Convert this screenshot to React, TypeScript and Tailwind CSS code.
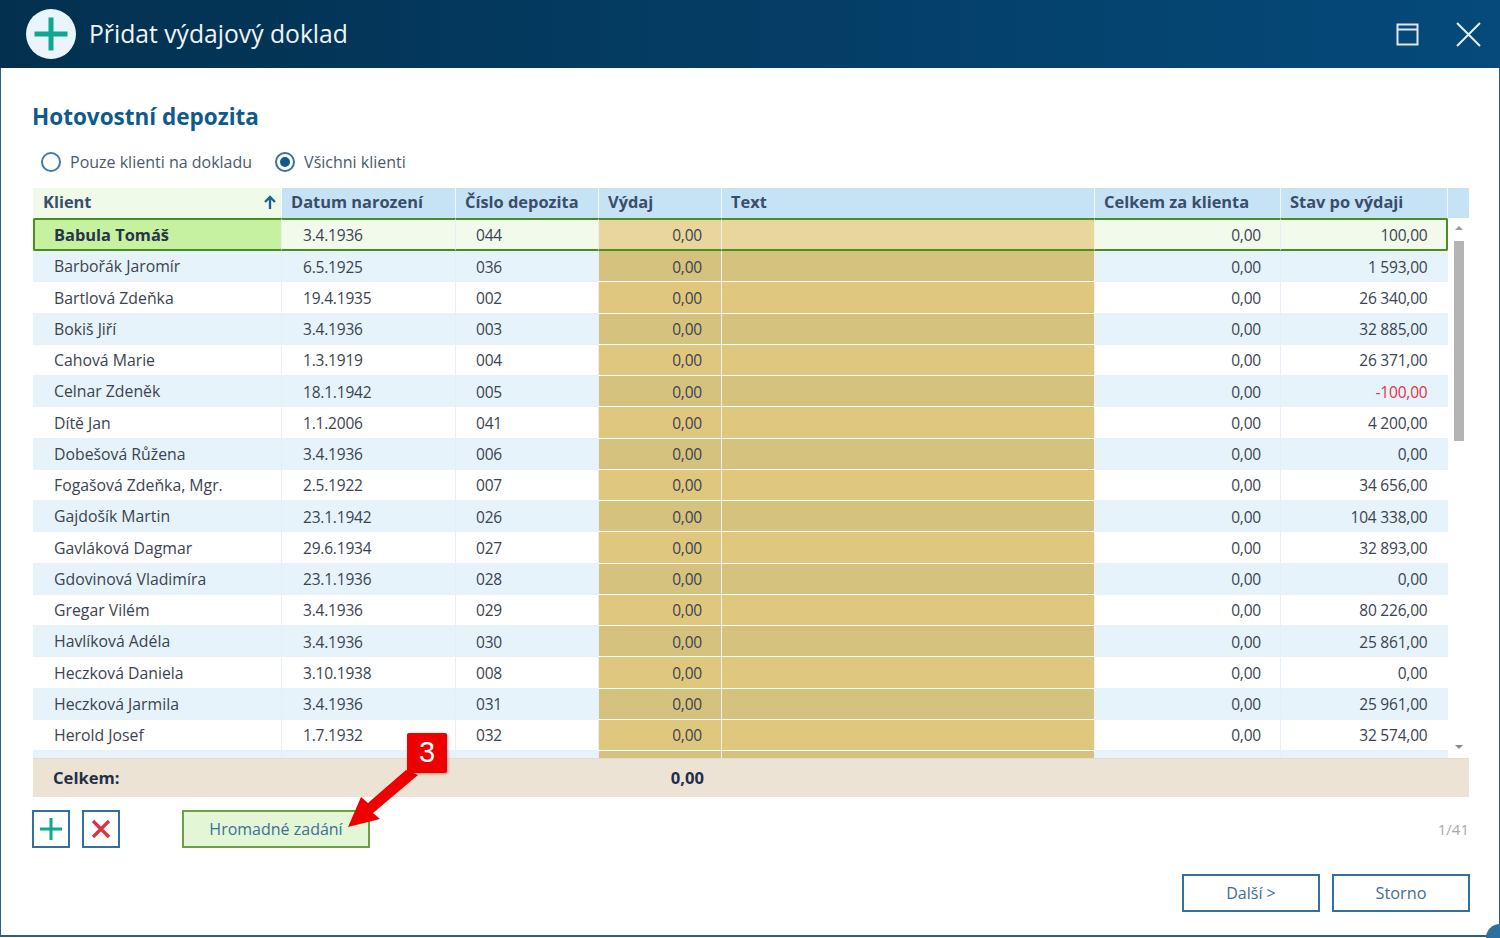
import React from 'react';

const rows = [
  ['Babula Tomáš', '3.4.1936', '044', '0,00', '100,00'],
  ['Barbořák Jaromír', '6.5.1925', '036', '0,00', '1 593,00'],
  ['Bartlová Zdeňka', '19.4.1935', '002', '0,00', '26 340,00'],
  ['Bokiš Jiří', '3.4.1936', '003', '0,00', '32 885,00'],
  ['Cahová Marie', '1.3.1919', '004', '0,00', '26 371,00'],
  ['Celnar Zdeněk', '18.1.1942', '005', '0,00', '-100,00'],
  ['Dítě Jan', '1.1.2006', '041', '0,00', '4 200,00'],
  ['Dobešová Růžena', '3.4.1936', '006', '0,00', '0,00'],
  ['Fogašová Zdeňka, Mgr.', '2.5.1922', '007', '0,00', '34 656,00'],
  ['Gajdošík Martin', '23.1.1942', '026', '0,00', '104 338,00'],
  ['Gavláková Dagmar', '29.6.1934', '027', '0,00', '32 893,00'],
  ['Gdovinová Vladimíra', '23.1.1936', '028', '0,00', '0,00'],
  ['Gregar Vilém', '3.4.1936', '029', '0,00', '80 226,00'],
  ['Havlíková Adéla', '3.4.1936', '030', '0,00', '25 861,00'],
  ['Heczková Daniela', '3.10.1938', '008', '0,00', '0,00'],
  ['Heczková Jarmila', '3.4.1936', '031', '0,00', '25 961,00'],
  ['Herold Josef', '1.7.1932', '032', '0,00', '32 574,00'],
  ['', '', '', '', ''],
];

const headers = ['Datum narození', 'Číslo depozita', 'Výdaj', 'Text', 'Celkem za klienta', 'Stav po výdaji'];

function Row({ row, index }: { row: string[]; index: number }) {
  const selected = index === 0;
  const alt = index % 2 === 1;
  const base = selected ? 'bg-[#f2faec]' : alt ? 'bg-[#e6f3fb]' : 'bg-white';
  const tan = selected ? 'bg-[#e8d69c]' : alt ? 'bg-[#d5c27e]' : 'bg-[#e0c77e]';
  const sel = selected ? 'border-y-2 border-[#4a8f1e]' : 'border-b border-[#e9f0f8]';
  const line = selected ? '' : 'border-b-white';
  const h = selected ? 'h-[33px]' : 'h-[31.25px]';
  return (
    <div className={`grid grid-cols-[249px_174px_143px_123px_373px_186px_167px] ${h} text-[15.5px] tracking-[-0.2px] text-[#3c4350]`}>
      <div
        className={`flex items-center pt-[2px] border-r border-r-[#e6eff8] tracking-normal ${sel} ${
          selected
            ? 'bg-[#c6f1a0] border-l-2 pl-[19px] text-[16.4px] font-bold text-[#27344a] rounded-l-[2px]'
            : `pl-[21px] text-[15.8px] ${base}`
        }`}
      >
        {row[0]}
      </div>
      <div className={`flex items-center pt-[2px] pl-[21px] border-r border-r-[#e6eff8] ${sel} ${base}`}>{row[1]}</div>
      <div className={`flex items-center pt-[2px] pl-[20px] border-r border-r-[#e6eff8] ${sel} ${base}`}>{row[2]}</div>
      <div className={`flex items-center justify-end pt-[2px] pr-[19px] border-r border-r-[#f0f0ea] ${sel} ${line} ${tan}`}>{row[3]}</div>
      <div className={`border-r border-r-[#f0f0ea] ${sel} ${line} ${tan}`} />
      <div className={`flex items-center justify-end pt-[2px] pr-[19px] border-r border-r-[#e6eff8] ${sel} ${base}`}>{row[3]}</div>
      <div
        className={`flex items-center justify-end pt-[2px] ${sel} ${base} ${selected ? 'border-r-2 rounded-r-[2px] pr-[18.5px]' : 'pr-[20.5px]'} ${
          row[4].startsWith('-') ? 'text-[#e8304a]' : ''
        }`}
      >
        {row[4]}
      </div>
    </div>
  );
}

function FrameButton({ children, className }: { children: React.ReactNode; className?: string }) {
  return (
    <button className={`flex items-center justify-center border-2 border-[#35709c] bg-white text-[#3e6f96] ${className ?? ''}`}>
      {children}
    </button>
  );
}

export default function App() {
  return (
    <div className="relative h-[938px] w-[1500px] bg-white font-['Open_Sans',sans-serif] overflow-hidden">
      <div className="flex h-[937px] flex-col border-x border-b-2 border-[#2a5f87]">
        {/* title bar */}
        <div className="-mx-px flex h-[68px] shrink-0 items-center bg-gradient-to-r from-[#03304f] to-[#054a7b] pl-[26px] pr-[19px]">
          <div className="flex h-[50px] w-[50px] items-center justify-center rounded-full bg-[#e9f4fb]">
            <svg width="34" height="34" viewBox="0 0 34 34">
              <path d="M17 0.5V33.5M0.5 17H33.5" stroke="#10a690" strokeWidth="5" />
            </svg>
          </div>
          <div className="ml-[13px] text-[24.7px] text-[#eef5fa]">Přidat výdajový doklad</div>
          <div className="ml-auto flex items-center gap-[37px]">
            <svg width="23" height="23" viewBox="0 0 23 23" fill="none" stroke="#dfe8ef" strokeWidth="2">
              <path d="M1.5 1.5H21.5V21.5H1.5ZM1.5 6.5H21.5" />
            </svg>
            <svg width="25" height="25" viewBox="0 0 25 25" fill="none" stroke="#e6eef4" strokeWidth="2">
              <path d="M1 1L24 24M24 1L1 24" />
            </svg>
          </div>
        </div>

        <div className="flex flex-1 flex-col pl-[32px] pr-[29px]">
          <h1 className="-ml-px mt-[33px] text-[22.5px] leading-[31px] font-bold text-[#0f5a8c]">Hotovostní depozita</h1>

          <div className="mt-[15px] flex h-[30px] items-center pl-[8px] text-[16px] text-[#4a5a6a]">
            <span className="h-[20px] w-[20px] rounded-full border-2 border-[#4a77a0]" />
            <span className="ml-[9px]">Pouze klienti na dokladu</span>
            <span className="ml-[23px] flex h-[20px] w-[20px] items-center justify-center rounded-full border-2 border-[#3d6f9c]">
              <span className="h-[10px] w-[10px] rounded-full bg-[#0f5a8c]" />
            </span>
            <span className="ml-[9px]">Všichni klienti</span>
          </div>

          {/* table */}
          <div className="mt-[11px] w-[1436px]">
            <div className="flex h-[30px] bg-[#c5e3f5] text-[16.4px] font-bold text-[#3a4d6b]">
              <div className="flex w-[249px] items-center justify-between border-r border-white bg-[#f0fae8] pb-[2px] pl-[10px] pr-[5px]">
                <span>Klient</span>
                <svg width="12" height="14" viewBox="0 0 12 14" fill="none" stroke="#1f6394" strokeWidth="2.4">
                  <path d="M6 14V2M1 7L6 2L11 7" />
                </svg>
              </div>
              <div className="grid grid-cols-[174px_143px_123px_373px_186px_167px]">
                {headers.map((h) => (
                  <div key={h} className="flex items-center border-r border-[#eef6fb] pb-[2px] pl-[9px]">
                    {h}
                  </div>
                ))}
              </div>
            </div>

            <div className="flex h-[540px]">
              <div className="w-[1415px] overflow-hidden">
                {rows.map((r, i) => (
                  <Row key={i} row={r} index={i} />
                ))}
              </div>
              <div className="flex w-[21px] flex-col items-center bg-white pb-[9px] pt-[8px] pl-[1px]">
                <span className="h-0 w-0 border-x-[4px] border-b-[4px] border-x-transparent border-b-[#9a9a9a]" />
                <span className="mt-[11px] h-[200px] w-[10px] bg-[#b4b4b4]" />
                <span className="mt-auto h-0 w-0 border-x-[4px] border-t-[4px] border-x-transparent border-t-[#8a8a8a]" />
              </div>
            </div>

            <div className="flex h-[39px] items-center border-t border-[#e3dcd0] bg-[#ede3d5] text-[16.6px] font-bold text-[#1f2f4a]">
              <div className="w-[565px] pl-[20px]">Celkem:</div>
              <div className="w-[106px] text-right">0,00</div>
            </div>
          </div>

          {/* action row */}
          <div className="-ml-px mt-[13px] flex h-[38px] w-[1437px] items-center">
            <FrameButton className="h-[38px] w-[38px]">
              <svg width="22" height="22" viewBox="0 0 22 22">
                <path d="M11 0V22M0 11H22" stroke="#10a690" strokeWidth="3" />
              </svg>
            </FrameButton>
            <FrameButton className="ml-[12px] h-[38px] w-[38px]">
              <svg width="20" height="20" viewBox="0 0 20 20">
                <path d="M2 2L18 18M18 2L2 18" stroke="#d93644" strokeWidth="3.4" />
              </svg>
            </FrameButton>
            <button className="ml-[62px] h-[38px] w-[188px] border-2 border-[#6ea04a] bg-[#e3f6d6] text-[16px] text-[#3e6f96]">
              Hromadné zadání
            </button>
            <span className="ml-auto text-[15px] text-[#a5a9ad]">1/41</span>
          </div>

          <div className="mt-[26px] flex w-[1437px] justify-end gap-[12px] text-[16px]">
            <FrameButton className="h-[38px] w-[138px]">Další &gt;</FrameButton>
            <FrameButton className="h-[38px] w-[138px] text-[16.3px]">Storno</FrameButton>
          </div>
        </div>
      </div>

      {/* annotation: callout pointing at the bulk entry button */}
      <svg className="absolute left-[340px] top-[765px]" width="90" height="70" viewBox="0 0 90 70">
        <path d="M8 62L21 32L28 38L66 5L78 10L33 48L40 54Z" fill="#ee0000" />
      </svg>
      <div className="absolute left-[407px] top-[733px] flex h-[40px] w-[40px] items-center justify-center rounded-[2px] bg-[#ee0000] font-['Liberation_Sans',sans-serif] text-[29px] text-white shadow-[1px_1px_3px_rgba(0,0,0,0.35)]">
        3
      </div>
      <div className="absolute bottom-0 right-0 h-[14px] w-[14px] rounded-tl-full bg-[#2f6f9f]" />
    </div>
  );
}
